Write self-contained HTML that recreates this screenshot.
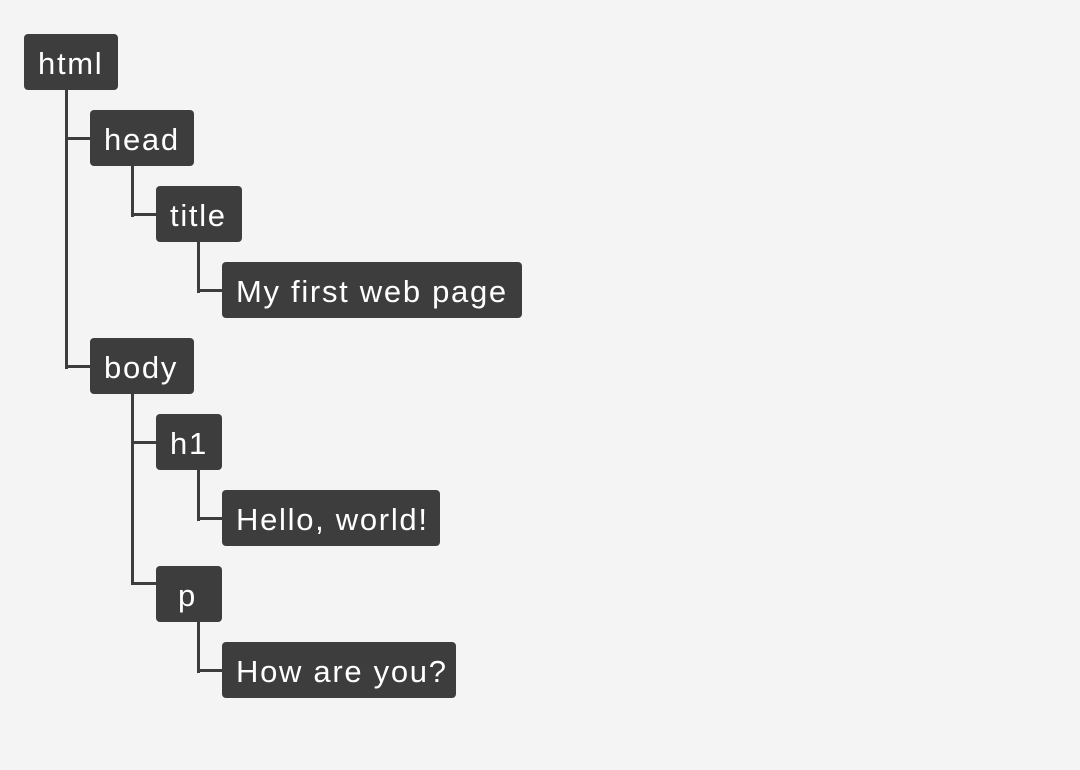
<!DOCTYPE html>
<html><head><style>
body{margin:0;width:1080px;height:770px;background:#f4f4f4;position:relative;overflow:hidden;font-family:"Liberation Sans",sans-serif}
.b{position:absolute;height:56px;background:#3d3d3d;color:#fff;border-radius:4px;font-size:31px;letter-spacing:1.7px;line-height:59px;padding:0 14px;box-sizing:border-box;white-space:nowrap}
.v,.h{position:absolute;background:#3d3d3d}
.v{width:3px}.h{height:3px}
</style></head><body>
<div class="v" style="left:65px;top:88px;height:281px"></div>
<div class="h" style="left:65px;top:137px;width:27px"></div>
<div class="h" style="left:65px;top:365px;width:27px"></div>
<div class="v" style="left:131px;top:164px;height:53px"></div>
<div class="h" style="left:131px;top:213px;width:27px"></div>
<div class="v" style="left:197px;top:240px;height:53px"></div>
<div class="h" style="left:197px;top:289px;width:27px"></div>
<div class="v" style="left:131px;top:392px;height:193px"></div>
<div class="h" style="left:131px;top:441px;width:27px"></div>
<div class="h" style="left:131px;top:582px;width:27px"></div>
<div class="v" style="left:197px;top:468px;height:53px"></div>
<div class="h" style="left:197px;top:517px;width:27px"></div>
<div class="v" style="left:197px;top:620px;height:53px"></div>
<div class="h" style="left:197px;top:669px;width:27px"></div>
<div class="b" style="left:24px;top:34px;width:94px">html</div>
<div class="b" style="left:90px;top:110px;width:104px">head</div>
<div class="b" style="left:156px;top:186px;width:86px">title</div>
<div class="b" style="left:222px;top:262px;width:300px">My first web page</div>
<div class="b" style="left:90px;top:338px;width:104px">body</div>
<div class="b" style="left:156px;top:414px;width:66px">h1</div>
<div class="b" style="left:222px;top:490px;width:218px">Hello, world!</div>
<div class="b" style="left:156px;top:566px;width:66px;padding:0 22px">p</div>
<div class="b" style="left:222px;top:642px;width:234px">How are you?</div>
</body></html>
